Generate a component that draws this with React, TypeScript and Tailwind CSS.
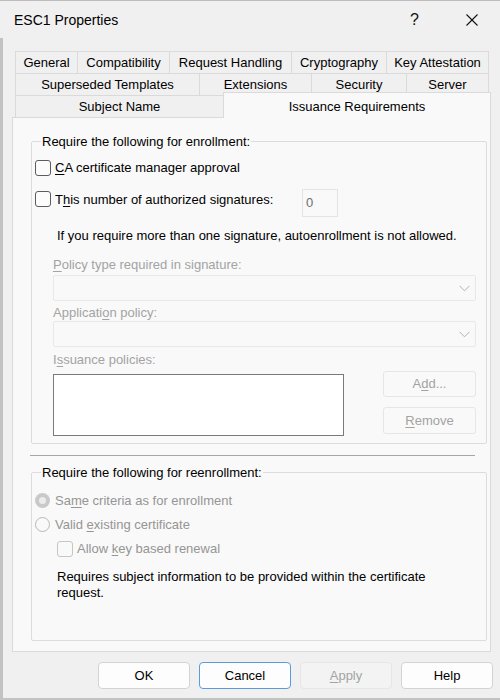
import React from "react";

function U({ children }: { children: React.ReactNode }) {
  return <span className="underline decoration-1 underline-offset-[2px]">{children}</span>;
}

function Checkbox({ disabled }: { disabled?: boolean }) {
  return (
    <div
      className={
        disabled
          ? "w-[16px] h-[16px] shrink-0 rounded-[3px] border border-[#c6c6c6] bg-[#f9f9f9]"
          : "w-[16px] h-[16px] shrink-0 rounded-[3px] border border-[#5c5c5c] bg-[#fcfcfc]"
      }
    />
  );
}

function Chevron() {
  return (
    <svg width="11" height="7" viewBox="0 0 11 7" className="shrink-0">
      <polyline points="0.5,0.8 5.5,5.8 10.5,0.8" fill="none" stroke="#b3b3b3" strokeWidth="1" />
    </svg>
  );
}

export default function App() {
  return (
    <div className="w-[500px] h-[700px] bg-[#f0f0f0] border-t border-[#bcbcbc] flex flex-col overflow-hidden font-['Liberation_Sans',Arial,sans-serif] text-[13px] leading-[16px] text-black">
      {/* Title bar */}
      <div className="h-[37px] shrink-0 flex items-center">
        <div className="pl-[14px] text-[14px] pt-[1px]">ESC1 Properties</div>
        <div className="flex-1" />
        <span className="text-[16px] leading-none text-[#111]">?</span>
        <div className="w-[47px]" />
        <svg width="12" height="12" viewBox="0 0 12 12" className="mt-[1px]">
          <line x1="0.5" y1="0.5" x2="11.5" y2="11.5" stroke="#111" strokeWidth="1.1" />
          <line x1="11.5" y1="0.5" x2="0.5" y2="11.5" stroke="#111" strokeWidth="1.1" />
        </svg>
        <div className="w-[22px]" />
      </div>

      {/* Body */}
      <div className="flex-1 border-l-[3px] border-b-2 border-[#c2c2c2] pl-[9px] pt-[13px] flex flex-col">
        {/* Tabs */}
        <div className="flex h-[22px] ml-[3px]">
          <div className="w-[62px] h-full flex items-center justify-center border-t border-l border-[#dadada]">General</div>
          <div className="w-[92px] h-full flex items-center justify-center border-t border-l border-[#dadada]">Compatibility</div>
          <div className="w-[122px] h-full flex items-center justify-center border-t border-l border-[#dadada]">Request Handling</div>
          <div className="w-[95px] h-full flex items-center justify-center border-t border-l border-[#dadada]">Cryptography</div>
          <div className="w-[103px] h-full flex items-center justify-center border-t border-l border-r border-[#dadada]">Key Attestation</div>
        </div>
        <div className="flex h-[22px] ml-[3px]">
          <div className="w-[184px] h-full flex items-center justify-center border-t border-l border-[#dadada]">Superseded Templates</div>
          <div className="w-[112px] h-full flex items-center justify-center border-t border-l border-[#dadada]">Extensions</div>
          <div className="w-[95px] h-full flex items-center justify-center border-t border-l border-[#dadada]">Security</div>
          <div className="w-[83px] h-full flex items-center justify-center border-t border-l border-r border-[#dadada]">Server</div>
        </div>
        <div className="flex items-end h-[22px] ml-[3px]">
          <div className="w-[208px] h-[22px] flex items-center justify-center border-t border-l border-[#dadada]">Subject Name</div>
          <div className="relative z-10 w-[268px] h-[26px] -mb-px flex items-start justify-center pt-[6px] bg-[#f9f9f9] border-t border-l border-r border-[#dadada]">
            Issuance Requirements
          </div>
        </div>

        {/* Panel */}
        <div className="w-[479px] h-[535px] shrink-0 bg-[#f9f9f9] border border-[#dadada] flex flex-col">
          {/* Group 1 */}
          <div className="relative ml-[18px] mt-[23px] w-[456px] h-[303px] border border-[#dcdcdc] rounded-[2px] pl-[3px] flex flex-col">
            <span className="absolute left-[9px] -top-[8px] px-[1px] bg-[#f9f9f9]">Require the following for enrollment:</span>

            <div className="flex items-center h-[16px] mt-[18px]">
              <Checkbox />
              <span className="ml-[4px]"><U>C</U>A certificate manager approval</span>
            </div>

            <div className="flex items-start mt-[13px]">
              <div className="mt-[2px]"><Checkbox /></div>
              <span className="ml-[4px] w-[247px] mt-[3px]">T<U>h</U>is number of authorized signatures:</span>
              <div className="w-[36px] h-[28px] border border-[#e4e4e4] bg-[#f9f9f9] flex items-center pl-[3px] text-[#6e6e6e]">0</div>
            </div>

            <div className="ml-[22px] mt-[11px]">If you require more than one signature, autoenrollment is not allowed.</div>

            <div className="ml-[18px] mt-[13px] text-[#a3a3a3]"><U>P</U>olicy type required in signature:</div>
            <div className="ml-[18px] mt-[2px] w-[423px] h-[26px] border border-[#e8e8e8] rounded-[2px] flex items-center justify-end pr-[5px]">
              <Chevron />
            </div>

            <div className="ml-[18px] mt-[4px] text-[#a3a3a3]">Applicati<U>o</U>n policy:</div>
            <div className="ml-[18px] w-[423px] h-[26px] border border-[#e8e8e8] rounded-[2px] flex items-center justify-end pr-[5px]">
              <Chevron />
            </div>

            <div className="ml-[18px] mt-[5px] text-[#a3a3a3]">I<U>s</U>suance policies:</div>
            <div className="ml-[18px] flex items-start">
              <div className="mt-[6px] w-[291px] h-[62px] border border-[#7a7a7a] bg-white" />
              <div className="ml-[39px] flex flex-col mt-[3px]">
                <div className="w-[93px] h-[26px] border border-[#e6e6e6] rounded-[3px] flex items-center justify-center text-[#a3a3a3]">A<U>d</U>d...</div>
                <div className="mt-[10px] w-[93px] h-[27px] border border-[#e6e6e6] rounded-[3px] flex items-center justify-center text-[#a3a3a3]"><U>R</U>emove</div>
              </div>
            </div>
          </div>

          {/* Separator */}
          <div className="ml-[17px] mt-[11px] w-[445px] h-px bg-[#a6a6a6]" />

          {/* Group 2 */}
          <div className="relative ml-[18px] mt-[16px] w-[456px] h-[169px] border border-[#dcdcdc] rounded-[2px] pl-[3px] flex flex-col">
            <span className="absolute left-[9px] -top-[8px] px-[1px] bg-[#f9f9f9]">Require the following for reenrollment:</span>

            <div className="flex items-center h-[15px] mt-[20px]">
              <div className="w-[15px] h-[15px] rounded-full bg-[#c9c9c9] flex items-center justify-center shrink-0">
                <div className="w-[7px] h-[7px] rounded-full bg-[#ececec]" />
              </div>
              <span className="ml-[5px] text-[#959595]">Sa<U>m</U>e criteria as for enrollment</span>
            </div>

            <div className="flex items-center h-[15px] mt-[9px]">
              <div className="w-[15px] h-[15px] rounded-full border border-[#b8b8b8] bg-[#f9f9f9] shrink-0" />
              <span className="ml-[5px] text-[#959595]">Valid <U>e</U>xisting certificate</span>
            </div>

            <div className="flex items-center h-[16px] mt-[9px] ml-[22px]">
              <Checkbox disabled />
              <span className="ml-[4px] text-[#959595]">Allow <U>k</U>ey based renewal</span>
            </div>

            <div className="ml-[22px] mt-[12px] w-[400px]">
              Requires subject information to be provided within the certificate request.
            </div>
          </div>
        </div>

        {/* Buttons */}
        <div className="flex gap-[9px] ml-[86px] mt-[10px]">
          <div className="w-[92px] h-[27px] rounded-[4px] border border-[#d3d3d3] bg-[#fdfdfd] flex items-center justify-center">OK</div>
          <div className="w-[92px] h-[27px] rounded-[4px] border border-[#5a9be0] bg-[#fdfdfd] flex items-center justify-center">Cancel</div>
          <div className="w-[92px] h-[27px] rounded-[4px] border border-[#e6e6e6] bg-[#f3f3f3] flex items-center justify-center text-[#a3a3a3]"><U>A</U>pply</div>
          <div className="w-[92px] h-[27px] rounded-[4px] border border-[#d3d3d3] bg-[#fdfdfd] flex items-center justify-center">Help</div>
        </div>
      </div>
    </div>
  );
}
